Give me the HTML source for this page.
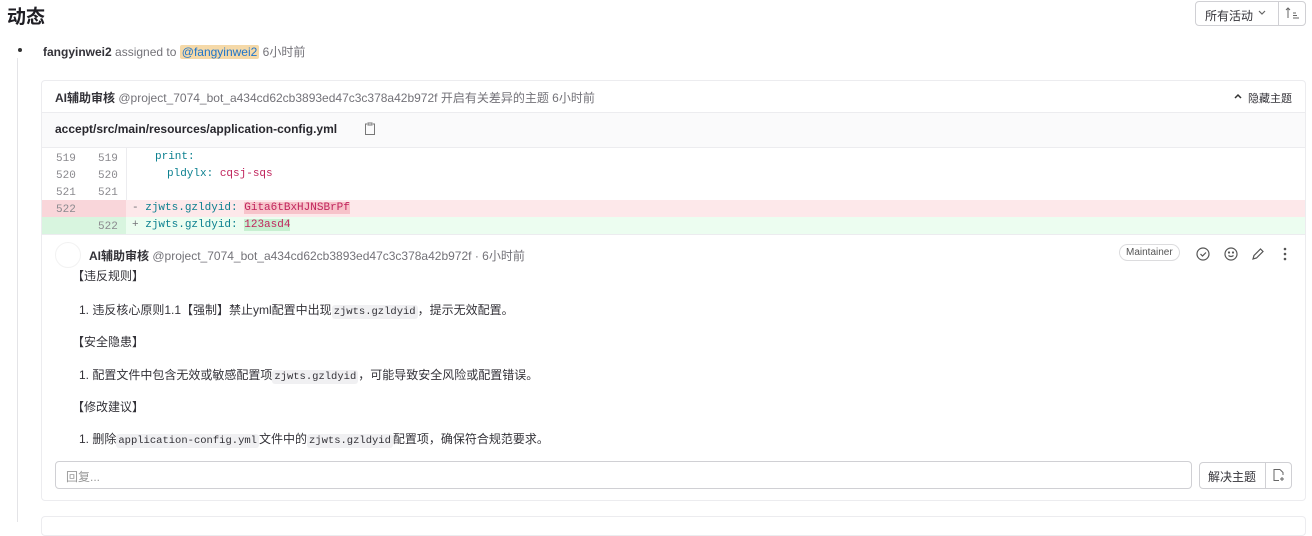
<!DOCTYPE html>
<html><head><meta charset="utf-8"><style>
*{box-sizing:border-box;margin:0;padding:0}
body{width:1312px;height:522px;overflow:hidden;background:#fff;font-family:"Liberation Sans","Noto Sans CJK SC",sans-serif;color:#333238;font-size:12px;position:relative}
.a{position:absolute;white-space:nowrap}
.mono{font-family:"Liberation Mono","DejaVu Sans Mono",monospace;font-size:11px}
.code{font-family:"Liberation Mono",monospace;font-size:10.5px;background:#f0f0f2;padding:1px 2px;border-radius:3px}
.g{color:#737278}
.btn{position:absolute;border:1px solid #d0d0d4;border-radius:4px;background:#fff}
svg{position:absolute}
</style></head><body>
<div class="a" style="left:7px;top:2px;font-size:19px;font-weight:bold;color:#1f1e24">动态</div>
<div class="btn" style="left:1195px;top:1px;width:84px;height:25px;border-radius:4px 0 0 4px"></div>
<div class="btn" style="left:1278px;top:1px;width:28px;height:25px;border-radius:0 4px 4px 0"></div>
<div class="a" style="left:1205px;top:7px;font-size:12px">所有活动</div>
<svg style="left:1258px;top:10px" width="8" height="6"><path d="M1 1l3 3 3-3" stroke="#666" fill="none" stroke-width="1.2"/></svg>
<svg style="left:1285px;top:6px" width="16" height="14"><path d="M3 12V2M1 4l2-2 2 2M8 7h3M8 9.5h4M8 12h6" stroke="#666" fill="none" stroke-width="1"/></svg>

<div class="a" style="left:17px;top:58px;width:1px;height:464px;background:#e4e4e7"></div>
<div class="a" style="left:18px;top:48px;width:4px;height:4px;border-radius:50%;background:#333"></div>
<div class="a" style="left:43px;top:43px"><b>fangyinwei2</b> <span class="g">assigned to</span> <span style="background:#f5d9a8;color:#1f75cb;padding:0 2px;border-radius:2px">@fangyinwei2</span> <span class="g">6小时前</span></div>

<div class="a" style="left:41px;top:80px;width:1265px;height:421px;border:1px solid #ececef;border-radius:4px"></div>
<div class="a" style="left:55px;top:89px"><b>AI辅助审核</b> <span class="g">@project_7074_bot_a434cd62cb3893ed47c3c378a42b972f 开启有关差异的主题 6小时前</span></div>
<svg style="left:1234px;top:93px" width="8" height="6"><path d="M1 5l3-3 3 3" stroke="#333" fill="none" stroke-width="1.5"/></svg>
<div class="a" style="left:1248px;top:90px;font-size:11px">隐藏主题</div>
<div class="a" style="left:42px;top:112px;width:1263px;height:36px;background:#fafafb;border-top:1px solid #ececef;border-bottom:1px solid #ececef"></div>
<div class="a" style="left:55px;top:122px;font-weight:bold;color:#28272d">accept/src/main/resources/application-config.yml</div>
<svg style="left:364px;top:122px" width="12" height="14"><path d="M3 2H1.5v10.5h9V2H9M4 1h4v2H4z" stroke="#777" fill="none" stroke-width="1"/></svg>
<div class="a" style="left:126px;top:148px;width:1px;height:52px;background:#ececef"></div>
<div class="a" style="left:42px;top:200px;width:1263px;height:17px;background:#fde8ea"></div>
<div class="a" style="left:42px;top:200px;width:84px;height:17px;background:#f9d6da"></div>
<div class="a" style="left:42px;top:217px;width:1263px;height:17px;background:#ecfdf0"></div>
<div class="a" style="left:42px;top:217px;width:84px;height:17px;background:#d8f5df"></div>
<div class="a mono" style="left:56px;top:151px;line-height:17px;color:#8a898e">519<br>520<br>521<br>522</div>
<div class="a mono" style="left:98px;top:151px;line-height:17px;color:#8a898e">519<br>520<br>521<br><br>522</div>
<div class="a mono" style="left:155px;top:151px;color:#0a7f8f">print:</div>
<div class="a mono" style="left:167px;top:168px"><span style="color:#0a7f8f">pldylx:</span> <span style="color:#c0245c">cqsj-sqs</span></div>
<div class="a mono" style="left:132px;top:202px"><span class="g">-</span> <span style="color:#0a7f8f">zjwts.gzldyid:</span> <span style="color:#c0245c;background:#f7c3ca">Gita6tBxHJNSBrPf</span></div>
<div class="a mono" style="left:132px;top:219px"><span class="g">+</span> <span style="color:#0a7f8f">zjwts.gzldyid:</span> <span style="color:#c0245c;background:#c7efd1">123asd4</span></div>
<div class="a" style="left:42px;top:234px;width:1263px;height:1px;background:#ececef"></div>

<div class="a" style="left:55px;top:242px;width:26px;height:26px;border-radius:50%;border:1px solid #f2f2f2"></div>
<div class="a" style="left:89px;top:247px"><b>AI辅助审核</b> <span class="g">@project_7074_bot_a434cd62cb3893ed47c3c378a42b972f · 6小时前</span></div>
<div class="a" style="left:1119px;top:244px;border:1px solid #dcdcde;border-radius:10px;padding:2px 6px;font-size:10px;color:#555">Maintainer</div>
<svg style="left:1195px;top:246px" width="100" height="16"><g stroke="#555" fill="none" stroke-width="1.2"><circle cx="8" cy="8" r="6"/><path d="M5.5 8l2 2 3.5-3.5"/><circle cx="36" cy="8" r="6"/><circle cx="34" cy="6.5" r=".5"/><circle cx="38" cy="6.5" r=".5"/><path d="M33.5 9.5q2.5 2 5 0"/><path d="M58 13l1-3.5 6.5-6.5 2.5 2.5-6.5 6.5z"/></g><g fill="#555"><circle cx="90" cy="3" r="1.3"/><circle cx="90" cy="8" r="1.3"/><circle cx="90" cy="13" r="1.3"/></g></svg>
<div class="a" style="left:72px;top:268px;line-height:16px">【违反规则】</div>
<div class="a" style="left:79px;top:301px">1. 违反核心原则1.1【强制】禁止yml配置中出现<span class="code">zjwts.gzldyid</span>，提示无效配置。</div>
<div class="a" style="left:72px;top:333px">【安全隐患】</div>
<div class="a" style="left:79px;top:366px">1. 配置文件中包含无效或敏感配置项<span class="code">zjwts.gzldyid</span>，可能导致安全风险或配置错误。</div>
<div class="a" style="left:72px;top:398px">【修改建议】</div>
<div class="a" style="left:79px;top:430px">1. 删除<span class="code">application-config.yml</span>文件中的<span class="code">zjwts.gzldyid</span>配置项，确保符合规范要求。</div>
<div class="btn" style="left:55px;top:461px;width:1137px;height:28px"></div>
<div class="a g" style="left:66px;top:468px;color:#999">回复...</div>
<div class="btn" style="left:1199px;top:462px;width:67px;height:27px;border-radius:4px 0 0 4px"></div>
<div class="btn" style="left:1265px;top:462px;width:27px;height:27px;border-radius:0 4px 4px 0"></div>
<div class="a" style="left:1208px;top:468px">解决主题</div>
<svg style="left:1272px;top:468px" width="14" height="14"><path d="M8 1.5H2v11h5M8 1.5l3 3V7M10 9v4M8 11h4" stroke="#666" fill="none" stroke-width="1"/></svg>
<div class="a" style="left:41px;top:516px;width:1265px;height:20px;border:1px solid #ececef;border-radius:4px"></div>
</body></html>
